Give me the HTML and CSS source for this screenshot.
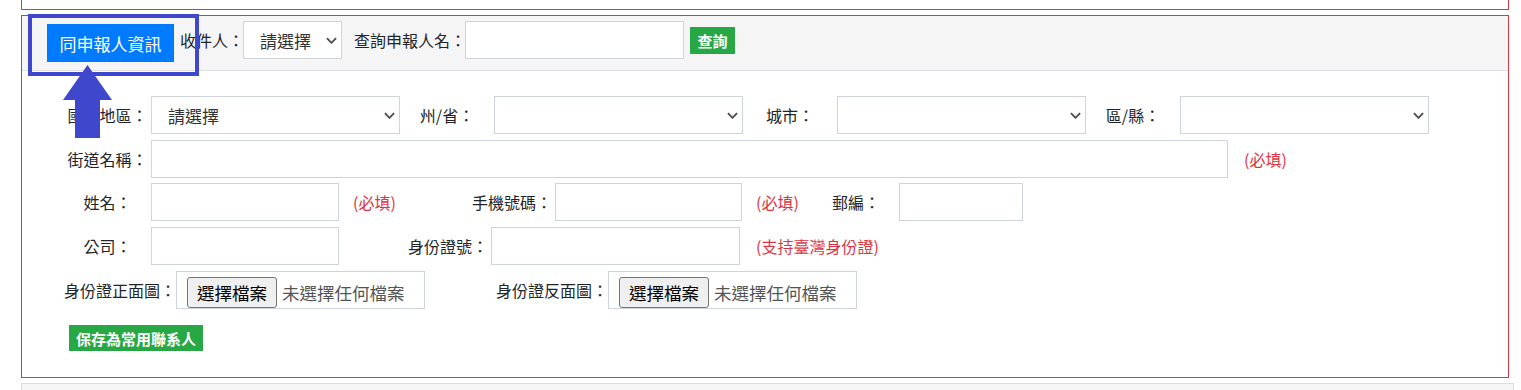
FILE: index.html
```html
<!DOCTYPE html>
<html lang="zh-Hant">
<head>
    <meta charset="UTF-8">
    <meta name="viewport" content="width=device-width, initial-scale=1.0">
    <title>收件人資訊</title>
    <link rel="stylesheet" href="styles.css">
</head>
<body>
    <div class="page">
        <div class="panel panel-prev"></div>

        <div class="panel panel-recv">
            <div class="panel-head">
                <button class="btn btn-blue">同申報人資訊</button>
                <span class="lbl lbl-recv">收件人：</span>
                <span class="sel sel-recv">
                    <select><option>請選擇</option></select>
                    <svg class="chev" viewBox="0 0 12 7"><path d="M1 1 L6 6 L11 1"/></svg>
                </span>
                <span class="lbl lbl-search">查詢申報人名：</span>
                <input class="txt txt-search" type="text">
                <button class="btn btn-green btn-query">查詢</button>
            </div>

            <div class="panel-body">
                <div class="row">
                    <span class="lbl cell-first">國家地區：</span>
                    <span class="sel sel-area">
                        <select><option>請選擇</option></select>
                        <svg class="chev" viewBox="0 0 12 7"><path d="M1 1 L6 6 L11 1"/></svg>
                    </span>
                    <span class="lbl cell-mid">州/省：</span>
                    <span class="sel sel-area">
                        <select><option></option></select>
                        <svg class="chev" viewBox="0 0 12 7"><path d="M1 1 L6 6 L11 1"/></svg>
                    </span>
                    <span class="lbl cell-mid">城市：</span>
                    <span class="sel sel-area">
                        <select><option></option></select>
                        <svg class="chev" viewBox="0 0 12 7"><path d="M1 1 L6 6 L11 1"/></svg>
                    </span>
                    <span class="lbl cell-mid">區/縣：</span>
                    <span class="sel sel-area">
                        <select><option></option></select>
                        <svg class="chev" viewBox="0 0 12 7"><path d="M1 1 L6 6 L11 1"/></svg>
                    </span>
                </div>

                <div class="row">
                    <span class="lbl cell-first">街道名稱：</span>
                    <input class="txt txt-street" type="text">
                    <span class="note note-street">(必填)</span>
                </div>

                <div class="row row-tight">
                    <span class="lbl cell-first">姓名：</span>
                    <input class="txt txt-short" type="text">
                    <span class="note note-name">(必填)</span>
                    <span class="lbl lbl-mobile">手機號碼：</span>
                    <input class="txt txt-mobile" type="text">
                    <span class="note note-mobile">(必填)</span>
                    <span class="lbl lbl-zip">郵編：</span>
                    <input class="txt txt-zip" type="text">
                </div>

                <div class="row">
                    <span class="lbl cell-first">公司：</span>
                    <input class="txt txt-short" type="text">
                    <span class="lbl lbl-idno">身份證號：</span>
                    <input class="txt txt-idno" type="text">
                    <span class="note note-idno">(支持臺灣身份證)</span>
                </div>

                <div class="row">
                    <span class="lbl lbl-file">身份證正面圖：</span>
                    <label class="file-box">
                        <span class="file-btn">選擇檔案</span>
                        <span class="file-name">未選擇任何檔案</span>
                    </label>
                    <span class="lbl lbl-file lbl-file-back">身份證反面圖：</span>
                    <label class="file-box">
                        <span class="file-btn">選擇檔案</span>
                        <span class="file-name">未選擇任何檔案</span>
                    </label>
                </div>

                <button class="btn btn-green btn-save">保存為常用聯系人</button>
            </div>
        </div>

        <div class="panel panel-next"></div>
    </div>

    <!-- annotation drawn over the form -->
    <svg class="annot" width="220" height="150" viewBox="0 0 220 150">
        <rect x="30" y="16" width="167" height="58" fill="none" stroke="#3f48cc" stroke-width="4"/>
        <polygon points="87.5,65 112,100 100,100 100,138 75,138 75,100 63,100" fill="#3f48cc"/>
    </svg>
</body>
</html>
```

FILE: styles.css
```css
* { margin: 0; padding: 0; box-sizing: border-box; }
body {
    font-family: "Noto Sans CJK TC", "Noto Sans", sans-serif;
    font-size: 16px;
    color: #212529;
    background: #fff;
    position: relative;
}
.page { padding-left: 21px; }

.panel { border: 1px solid #dc3545; width: 1488px; }
.panel-prev { height: 10px; border-top: none; }
.panel-recv { margin-top: 5px; height: 363px; }
.panel-next {
    margin-top: 5px;
    width: 1493px;
    height: 7px;
    border-color: #ddd;
    border-bottom: none;
    background: #f5f5f5;
}

.panel-head {
    display: flex;
    align-items: center;
    height: 55px;
    padding: 5px 25px 11px;
    background: #f5f5f5;
    border-bottom: 1px solid #dcdfe3;
}
.panel-body { padding: 25px 0 26px 42px; }

.lbl { white-space: nowrap; line-height: 20px; }
.note { color: #dc3545; white-space: nowrap; line-height: 20px; }

.btn {
    font-family: inherit;
    border: none;
    color: #fff;
    cursor: pointer;
    white-space: nowrap;
}
.btn-blue {
    background: #007bff;
    font-size: 17px;
    height: 38px;
    width: 127px;
    margin-top: 6px;
}
.btn-green {
    background: #28a745;
    font-size: 15px;
    font-weight: bold;
    height: 27px;
    padding: 0 7px;
}
.btn-query { margin-left: 6px; width: 45px; }
.btn-save { display: block; margin: 16px 0 0 5px; height: 26px; width: 134px; }

.lbl-recv { margin-left: 6px; width: 63px; }
.lbl-search { margin-left: 12px; width: 111px; }

.txt, .sel select {
    font-family: inherit;
    font-size: 17px;
    color: #333;
    height: 38px;
    border: 1px solid #ced4da;
    border-radius: 0;
    background: #fff;
    outline: none;
}
.txt { padding: 0 10px; }
.txt-search { width: 219px; }
.txt-street { width: 1077px; }
.txt-short { width: 188px; }
.txt-mobile { width: 187px; }
.txt-zip { width: 124px; }
.txt-idno { width: 249px; }

.sel { position: relative; display: block; }
.sel select {
    appearance: none;
    -webkit-appearance: none;
    width: 100%;
    padding-left: 16px;
}
.sel-recv { width: 99px; }
.sel-area { width: 249px; }
.chev {
    position: absolute;
    right: 5px;
    top: 16px;
    width: 11px;
    height: 7px;
    fill: none;
    stroke: #4a4a4a;
    stroke-width: 2;
    pointer-events: none;
}

.row { display: flex; align-items: center; height: 38px; margin-top: 6px; }
.row:first-child { margin-top: 0; }
.row-tight { margin-top: 5px; }

.cell-first { width: 87px; text-align: center; }
.cell-mid { width: 94px; text-align: center; }

.note-street { margin-left: 16px; }
.note-name { width: 133px; padding-left: 14px; }
.lbl-mobile { width: 83px; padding-right: 3px; text-align: right; }
.note-mobile { width: 90px; padding-left: 14px; }
.lbl-zip { width: 67px; padding-right: 19px; }
.lbl-idno { width: 152px; padding-right: 3px; text-align: right; }
.note-idno { margin-left: 16px; }

.lbl-file { width: 112px; }
.lbl-file-back { margin-left: 71px; }
.file-box {
    display: flex;
    align-items: flex-start;
    width: 249px;
    height: 38px;
    padding: 5px 0 0 10px;
    border: 1px solid #ced4da;
    font-size: 17.5px;
}
.file-btn {
    height: 31px;
    padding: 0 9px;
    line-height: 29px;
    color: #000;
    background: #efefef;
    border: 1px solid #767676;
    border-radius: 3px;
    white-space: nowrap;
}
.file-name { margin-left: 5px; line-height: 31px; color: #555; white-space: nowrap; }

.annot { position: absolute; left: 0; top: 0; pointer-events: none; }
```
